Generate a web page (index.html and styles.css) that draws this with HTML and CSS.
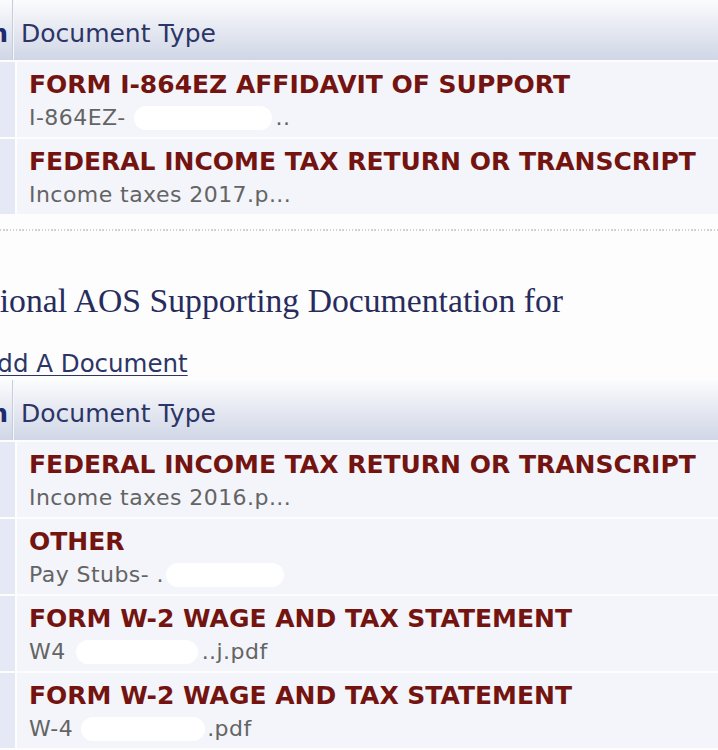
FILE: index.html
```html
<!DOCTYPE html>
<html lang="en">
<head>
<meta charset="utf-8">
<title>Supporting Documentation</title>
<link rel="stylesheet" href="styles.css">
</head>
<body>
<div class="page">
  <section class="doc-table">
    <div class="thead">
      <div class="c1"><span>Action</span></div>
      <div class="c2">Document Type</div>
    </div>
    <div class="row">
      <div class="c1"></div>
      <div class="c2">
        <div class="title">FORM I-864EZ AFFIDAVIT OF SUPPORT</div>
        <div class="sub">I-864EZ-<span class="redact r1"></span>..</div>
      </div>
    </div>
    <div class="row">
      <div class="c1"></div>
      <div class="c2">
        <div class="title">FEDERAL INCOME TAX RETURN OR TRANSCRIPT</div>
        <div class="sub">Income taxes 2017.p...</div>
      </div>
    </div>
  </section>

  <div class="dots"></div>

  <h2 class="section-title">Additional AOS Supporting Documentation for</h2>
  <a class="add-link" href="#">Add A Document</a>

  <section class="doc-table">
    <div class="thead">
      <div class="c1"><span>Action</span></div>
      <div class="c2">Document Type</div>
    </div>
    <div class="row">
      <div class="c1"></div>
      <div class="c2">
        <div class="title">FEDERAL INCOME TAX RETURN OR TRANSCRIPT</div>
        <div class="sub">Income taxes 2016.p...</div>
      </div>
    </div>
    <div class="row">
      <div class="c1"></div>
      <div class="c2">
        <div class="title">OTHER</div>
        <div class="sub">Pay Stubs- .<span class="redact r2"></span></div>
      </div>
    </div>
    <div class="row">
      <div class="c1"></div>
      <div class="c2">
        <div class="title">FORM W-2 WAGE AND TAX STATEMENT</div>
        <div class="sub">W4<span class="redact r3"></span>..j.pdf</div>
      </div>
    </div>
    <div class="row">
      <div class="c1"></div>
      <div class="c2">
        <div class="title">FORM W-2 WAGE AND TAX STATEMENT</div>
        <div class="sub">W-4<span class="redact r4"></span>.pdf</div>
      </div>
    </div>
  </section>
</div>
</body>
</html>
```
FILE: styles.css
```css
html, body {
  margin: 0;
  padding: 0;
  background: #fdfdfe;
  overflow: hidden;
}

.page {
  width: 718px;
  font-family: "DejaVu Sans", Verdana, sans-serif;
}

.doc-table {
  display: flex;
  flex-direction: column;
}

.thead {
  display: flex;
  height: 60px;
  background: linear-gradient(#fbfcfd 0%, #eef0f6 30%, #d0d6e6 100%);
  font-size: 25px;
  line-height: 28px;
}

.thead .c1 {
  width: 14px;
  flex: none;
  display: flex;
  justify-content: flex-end;
  overflow: hidden;
  padding-top: 20px;
  padding-right: 5px;
  box-sizing: border-box;
  border-right: 1px solid #f7f8fb;
  box-shadow: inset -1px 0 #c6ccdc;
  color: #1c2a6e;
  font-weight: bold;
}

.thead .c1 span {
  flex: none;
}

.thead .c2 {
  flex: 1;
  padding: 20px 0 0 7px;
  color: #2c3566;
}

.row {
  display: flex;
  height: 75px;
  border-top: 2px solid #fdfdfe;
}

.row .c1 {
  width: 15px;
  flex: none;
  background: #e5e9f6;
}

.row .c2 {
  flex: 1;
  margin-left: 2px;
  background: #f3f5fa;
  padding: 9px 12px 0;
}

.title {
  font-weight: bold;
  font-size: 25px;
  line-height: 28px;
  color: #741410;
  white-space: nowrap;
  margin-bottom: 5px;
}

.sub {
  font-size: 22px;
  line-height: 28px;
  letter-spacing: 0.45px;
  color: #646464;
  white-space: nowrap;
}

.redact {
  display: inline-block;
  height: 24px;
  vertical-align: -5px;
  background: #ffffff;
  border-radius: 12px;
}

.r1 { width: 138px; margin: 0 4px 0 8px; }
.r2 { width: 118px; margin-left: 2px; }
.r3 { width: 122px; margin: 0 4px 0 10px; }
.r4 { width: 124px; margin: 0 2px 0 8px; }

.dots {
  margin-top: 15px;
  height: 2px;
  background-image: repeating-linear-gradient(90deg, #cdd1da 0 1.5px, transparent 1.5px 3.2px);
}

.section-title {
  margin: 50px 0 0 -77px;
  font-family: "Liberation Serif", "Times New Roman", serif;
  font-weight: normal;
  font-size: 33.7px;
  line-height: 40px;
  color: #272c5c;
  white-space: nowrap;
}

.add-link {
  display: block;
  margin: 29px 0 2px -19px;
  font-size: 24.5px;
  line-height: 28px;
  color: #2c3566;
  text-decoration: underline;
  text-decoration-thickness: 1px;
  text-underline-offset: 3px;
  white-space: nowrap;
}
```
